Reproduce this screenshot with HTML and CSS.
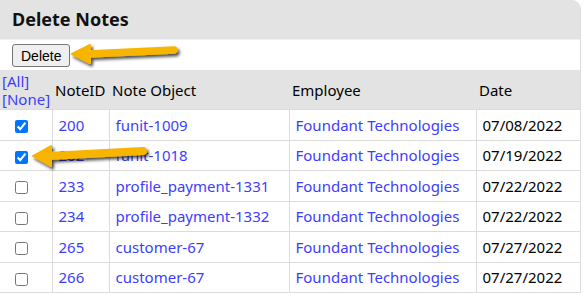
FILE: index.html
```html
<!DOCTYPE html>
<html lang="en">
<head>
    <meta charset="UTF-8">
    <title>Delete Notes</title>
    <link rel="stylesheet" href="styles.css">
</head>
<body>
    <div class="panel">
        <div class="panel-title">Delete Notes</div>
        <div class="toolbar">
            <button class="btn-delete">Delete</button>
        </div>
        <table class="notes">
            <colgroup>
                <col class="c-check">
                <col class="c-id">
                <col class="c-object">
                <col class="c-employee">
                <col class="c-date">
            </colgroup>
            <thead>
                <tr>
                    <th class="select-links"><a href="#">[All]</a><br><a href="#">[None]</a></th>
                    <th>NoteID</th>
                    <th>Note Object</th>
                    <th>Employee</th>
                    <th>Date</th>
                </tr>
            </thead>
            <tbody>
                <tr>
                    <td class="check"><input type="checkbox" checked></td>
                    <td><a href="#">200</a></td>
                    <td><a href="#">funit-1009</a></td>
                    <td><a href="#">Foundant Technologies</a></td>
                    <td>07/08/2022</td>
                </tr>
                <tr>
                    <td class="check"><input type="checkbox" checked></td>
                    <td><a href="#">202</a></td>
                    <td><a href="#">funit-1018</a></td>
                    <td><a href="#">Foundant Technologies</a></td>
                    <td>07/19/2022</td>
                </tr>
                <tr>
                    <td class="check"><input type="checkbox"></td>
                    <td><a href="#">233</a></td>
                    <td><a href="#">profile_payment-1331</a></td>
                    <td><a href="#">Foundant Technologies</a></td>
                    <td>07/22/2022</td>
                </tr>
                <tr>
                    <td class="check"><input type="checkbox"></td>
                    <td><a href="#">234</a></td>
                    <td><a href="#">profile_payment-1332</a></td>
                    <td><a href="#">Foundant Technologies</a></td>
                    <td>07/22/2022</td>
                </tr>
                <tr>
                    <td class="check"><input type="checkbox"></td>
                    <td><a href="#">265</a></td>
                    <td><a href="#">customer-67</a></td>
                    <td><a href="#">Foundant Technologies</a></td>
                    <td>07/27/2022</td>
                </tr>
                <tr>
                    <td class="check"><input type="checkbox"></td>
                    <td><a href="#">266</a></td>
                    <td><a href="#">customer-67</a></td>
                    <td><a href="#">Foundant Technologies</a></td>
                    <td>07/27/2022</td>
                </tr>
            </tbody>
        </table>
    </div>

    <!-- annotation arrows -->
    <svg class="arrow arrow-delete" width="120" height="30" viewBox="0 0 120 30">
        <defs>
            <filter id="shade" x="-20%" y="-50%" width="140%" height="200%">
                <feDropShadow dx="2" dy="2.5" stdDeviation="1.5" flood-color="#000" flood-opacity="0.7"/>
            </filter>
        </defs>
        <g filter="url(#shade)" fill="#f7b500" stroke="#f7b500">
            <line x1="18" y1="12" x2="104" y2="8" stroke-width="7.5" stroke-linecap="round"/>
            <polygon points="2,12 20,3 20,21" stroke-width="2" stroke-linejoin="round"/>
        </g>
    </svg>
    <svg class="arrow arrow-check" width="125" height="34" viewBox="0 0 125 34">
        <g filter="url(#shade)" fill="#f7b500" stroke="#f7b500">
            <line x1="18" y1="15" x2="112" y2="10" stroke-width="8" stroke-linecap="round"/>
            <polygon points="2,15 20,5 20,25" stroke-width="2" stroke-linejoin="round"/>
        </g>
    </svg>
</body>
</html>
```

FILE: styles.css
```css
body {
    margin: 0;
    font-family: "Noto Sans", sans-serif;
    font-size: 15px;
    color: #000;
    background: #fff;
}

a {
    color: #3d3dff;
    text-decoration: none;
}

.panel {
    width: 580px;
    border-right: 1px solid #dcdcdc;
    border-top-right-radius: 9px;
    overflow: hidden;
}

.panel-title {
    height: 39px;
    line-height: 39px;
    padding-left: 12px;
    background: #e3e3e3;
    font-size: 18px;
    font-weight: bold;
    color: #111;
}

.toolbar {
    height: 31px;
    padding-top: 4px;
    padding-left: 12px;
    box-sizing: border-box;
    border-top: 1px solid #f2f2f2;
    background: #fff;
}

.btn-delete {
    font-family: "Liberation Sans", Arial, sans-serif;
    font-size: 14px;
    height: 23px;
    padding: 0 8px;
    background: #efefef;
    border: 1px solid #767676;
    border-radius: 3px;
    color: #000;
}

.notes {
    width: 580px;
    border-collapse: collapse;
    table-layout: fixed;
}

.c-check { width: 52px; }
.c-id { width: 57px; }
.c-object { width: 180px; }
.c-employee { width: 187px; }
.c-date { width: 104px; }

.notes th {
    background: #e3e3e3;
    height: 39px;
    padding: 0 3px;
    text-align: left;
    font-weight: normal;
    border-bottom: 1px solid #dcdcdc;
}

.notes th.select-links {
    padding: 0 2px;
    line-height: 18px;
}

.notes td {
    height: 29.5px;
    padding: 0 6px;
    border: 1px solid #dcdcdc;
    white-space: nowrap;
}

.notes tr td:first-child {
    border-left: none;
}

.notes tr td:last-child {
    border-right: none;
}

.notes td.check {
    padding: 0 0 0 15px;
}

.notes td.check input {
    margin: 0;
    width: 13px;
    height: 13px;
    vertical-align: middle;
}

.arrow {
    position: absolute;
    overflow: visible;
}

.arrow-delete {
    left: 70px;
    top: 42px;
}

.arrow-check {
    left: 31px;
    top: 141px;
}
```
